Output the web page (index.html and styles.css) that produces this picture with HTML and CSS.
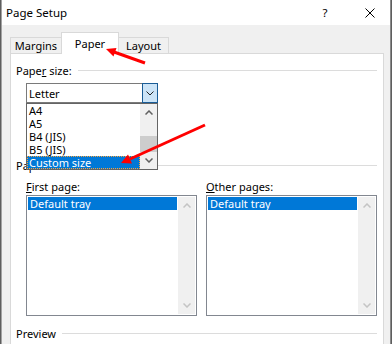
FILE: index.html
```html
<!DOCTYPE html>
<html lang="en">
<head>
    <meta charset="UTF-8">
    <title>Page Setup</title>
    <link rel="stylesheet" href="styles.css">
</head>
<body>
    <div class="window">
        <!-- Title bar -->
        <div class="titlebar">
            <span class="title">Page Setup</span>
            <span class="title-btn help">?</span>
            <span class="title-btn close">
                <svg width="10" height="10" viewBox="0 0 10 10"><path d="M0.5 0.5 L9.5 9.5 M9.5 0.5 L0.5 9.5" stroke="#000" stroke-width="1" fill="none"/></svg>
            </span>
        </div>

        <div class="dialog-body">
            <div class="tabs">
                <div class="tab">Margins</div>
                <div class="tab active">Paper</div>
                <div class="tab">Layout</div>
            </div>

            <div class="panel">
                <div class="group">
                    <span>Pape<u>r</u> size:</span>
                    <i class="rule"></i>
                </div>

                <div class="combo-wrap">
                    <div class="combo">
                        <span class="combo-text">Letter</span>
                        <span class="combo-btn">
                            <svg width="8" height="5" viewBox="0 0 8 5"><path d="M0.5 0.5 L4 4 L7.5 0.5" stroke="#222" stroke-width="1" fill="none"/></svg>
                        </span>
                    </div>
                    <!-- open drop-down list -->
                    <div class="dropdown">
                        <ul class="options">
                            <li>A4</li>
                            <li>A5</li>
                            <li>B4 (JIS)</li>
                            <li>B5 (JIS)</li>
                            <li class="selected focused">Custom size</li>
                        </ul>
                        <div class="vscroll">
                            <span class="arrow">
                                <svg width="8" height="5" viewBox="0 0 8 5"><path d="M0.5 4.5 L4 1 L7.5 4.5" stroke="#606060" stroke-width="1.5" fill="none"/></svg>
                            </span>
                            <div class="track"><div class="thumb"></div></div>
                            <span class="arrow">
                                <svg width="8" height="5" viewBox="0 0 8 5"><path d="M0.5 0.5 L4 4 L7.5 0.5" stroke="#606060" stroke-width="1.5" fill="none"/></svg>
                            </span>
                        </div>
                    </div>
                </div>

                <div class="group source">
                    <span>Paper source</span>
                    <i class="rule"></i>
                </div>

                <div class="trays">
                    <div class="tray">
                        <div class="tray-label"><u>F</u>irst page:</div>
                        <div class="listbox">
                            <ul class="options">
                                <li class="selected">Default tray</li>
                            </ul>
                            <div class="vscroll disabled">
                                <span class="arrow">
                                    <svg width="8" height="5" viewBox="0 0 8 5"><path d="M0.5 4.5 L4 1 L7.5 4.5" stroke="#c4c4c4" stroke-width="1.5" fill="none"/></svg>
                                </span>
                                <div class="track"></div>
                                <span class="arrow">
                                    <svg width="8" height="5" viewBox="0 0 8 5"><path d="M0.5 0.5 L4 4 L7.5 0.5" stroke="#c4c4c4" stroke-width="1.5" fill="none"/></svg>
                                </span>
                            </div>
                        </div>
                    </div>
                    <div class="tray">
                        <div class="tray-label"><u>O</u>ther pages:</div>
                        <div class="listbox">
                            <ul class="options">
                                <li class="selected">Default tray</li>
                            </ul>
                            <div class="vscroll disabled">
                                <span class="arrow">
                                    <svg width="8" height="5" viewBox="0 0 8 5"><path d="M0.5 4.5 L4 1 L7.5 4.5" stroke="#c4c4c4" stroke-width="1.5" fill="none"/></svg>
                                </span>
                                <div class="track"></div>
                                <span class="arrow">
                                    <svg width="8" height="5" viewBox="0 0 8 5"><path d="M0.5 0.5 L4 4 L7.5 0.5" stroke="#c4c4c4" stroke-width="1.5" fill="none"/></svg>
                                </span>
                            </div>
                        </div>
                    </div>
                </div>

                <div class="group preview">
                    <span>Preview</span>
                    <i class="rule"></i>
                </div>
            </div>
        </div>
    </div>

    <!-- red annotation arrows -->
    <svg class="annotations" width="392" height="344" viewBox="0 0 392 344">
        <line x1="145" y1="63" x2="114" y2="52" stroke="#ff0000" stroke-width="3"/>
        <polygon points="106,49 116.5,48 113.5,56.5" fill="#ff0000"/>
        <line x1="205" y1="125" x2="130" y2="159" stroke="#ff0000" stroke-width="3"/>
        <polygon points="121,163 128,154.5 132,163.5" fill="#ff0000"/>
    </svg>
</body>
</html>
```

FILE: styles.css
```css
html {
    background-color: #5e5e5e;
}
body {
    margin: 0;
    width: 392px;
    height: 344px;
    overflow: hidden;
    position: relative;
    font-family: "Segoe UI", "Noto Sans", sans-serif;
    font-size: 11px;
    color: #000;
}
ul {
    list-style: none;
    margin: 0;
    padding: 0;
}
.window {
    margin-left: 1px;
    width: 388px;
    height: 344px;
    border-left: 1px solid #a3a3a3;
    border-right: 1px solid #8a8a8a;
    background-color: #f0f0f0;
    overflow: hidden;
}
.titlebar {
    height: 25px;
    background-color: #fff;
    display: flex;
    align-items: center;
    font-size: 11.5px;
}
.title {
    padding-left: 4px;
    flex: 1;
}
.title-btn {
    width: 46px;
    height: 25px;
    display: flex;
    align-items: center;
    justify-content: center;
}
.help {
    margin-right: -1px;
}
.close {
    margin-right: -3px;
}
.dialog-body {
    padding-top: 7px;
}
.tabs {
    display: flex;
    align-items: flex-end;
    margin-left: 8px;
    height: 21px;
}
.tab {
    height: 16px;
    line-height: 15px;
    text-align: center;
    background-color: #f0f0f0;
    border: 1px solid #d9d9d9;
    border-bottom: none;
    box-sizing: border-box;
}
.tab:nth-child(1) {
    width: 52px;
}
.tab:nth-child(3) {
    width: 51px;
    margin-left: -1px;
}
.tab.active {
    width: 58px;
    height: 22px;
    line-height: 22px;
    margin-left: -1px;
    margin-bottom: -1px;
    background-color: #fff;
    position: relative;
    z-index: 1;
}
.panel {
    margin-left: 8px;
    width: 372px;
    height: 320px;
    background-color: #fff;
    border: 1px solid #d9d9d9;
}
.group {
    display: flex;
    align-items: center;
    height: 16px;
    margin-top: 8px;
    padding-left: 5px;
    padding-right: 6px;
}
.rule {
    flex: 1;
    height: 1px;
    margin-left: 6px;
    background-color: #dcdcdc;
}
.combo-wrap {
    position: relative;
    margin-top: 5px;
    margin-left: 15px;
    width: 132px;
}
.combo {
    height: 20px;
    box-sizing: border-box;
    border: 1px solid #7a7a7a;
    display: flex;
    align-items: center;
}
.combo-text {
    flex: 1;
    padding-left: 2px;
}
.combo-btn {
    width: 16px;
    height: 20px;
    margin: -1px -1px -1px 0;
    box-sizing: border-box;
    border: 1px solid #1a5c96;
    background-color: #cce4f7;
    display: flex;
    align-items: center;
    justify-content: center;
}
.dropdown {
    position: absolute;
    top: 20px;
    left: 0;
    width: 132px;
    height: 67px;
    box-sizing: border-box;
    border: 1px solid #646464;
    background-color: #fff;
    display: flex;
    z-index: 2;
}
.options {
    flex: 1;
}
.options li {
    height: 13px;
    line-height: 13px;
    padding-left: 2px;
    white-space: nowrap;
}
.options li.selected {
    background-color: #0078d7;
    color: #fff;
}
.options li.focused {
    outline: 1px dotted #f7a33c;
    outline-offset: -1px;
}
.vscroll {
    width: 17px;
    background-color: #f0f0f0;
    display: flex;
    flex-direction: column;
}
.vscroll .arrow {
    height: 17px;
    display: flex;
    align-items: center;
    justify-content: center;
}
.vscroll .track {
    flex: 1;
}
.thumb {
    margin-top: 15px;
    height: 16px;
    background-color: #cdcdcd;
}
.source {
    margin-top: 54px;
}
.trays {
    display: flex;
    gap: 9px;
    margin-top: 6px;
    margin-left: 15px;
}
.tray-label {
    height: 16px;
    line-height: 16px;
}
.listbox {
    width: 171px;
    height: 121px;
    box-sizing: border-box;
    border: 1px solid #828790;
    padding: 1px;
    display: flex;
}
.listbox .vscroll {
    margin-left: 1px;
}
.preview {
    margin-top: 9px;
}
.annotations {
    position: absolute;
    top: 0;
    left: 0;
    z-index: 10;
    pointer-events: none;
}
```
